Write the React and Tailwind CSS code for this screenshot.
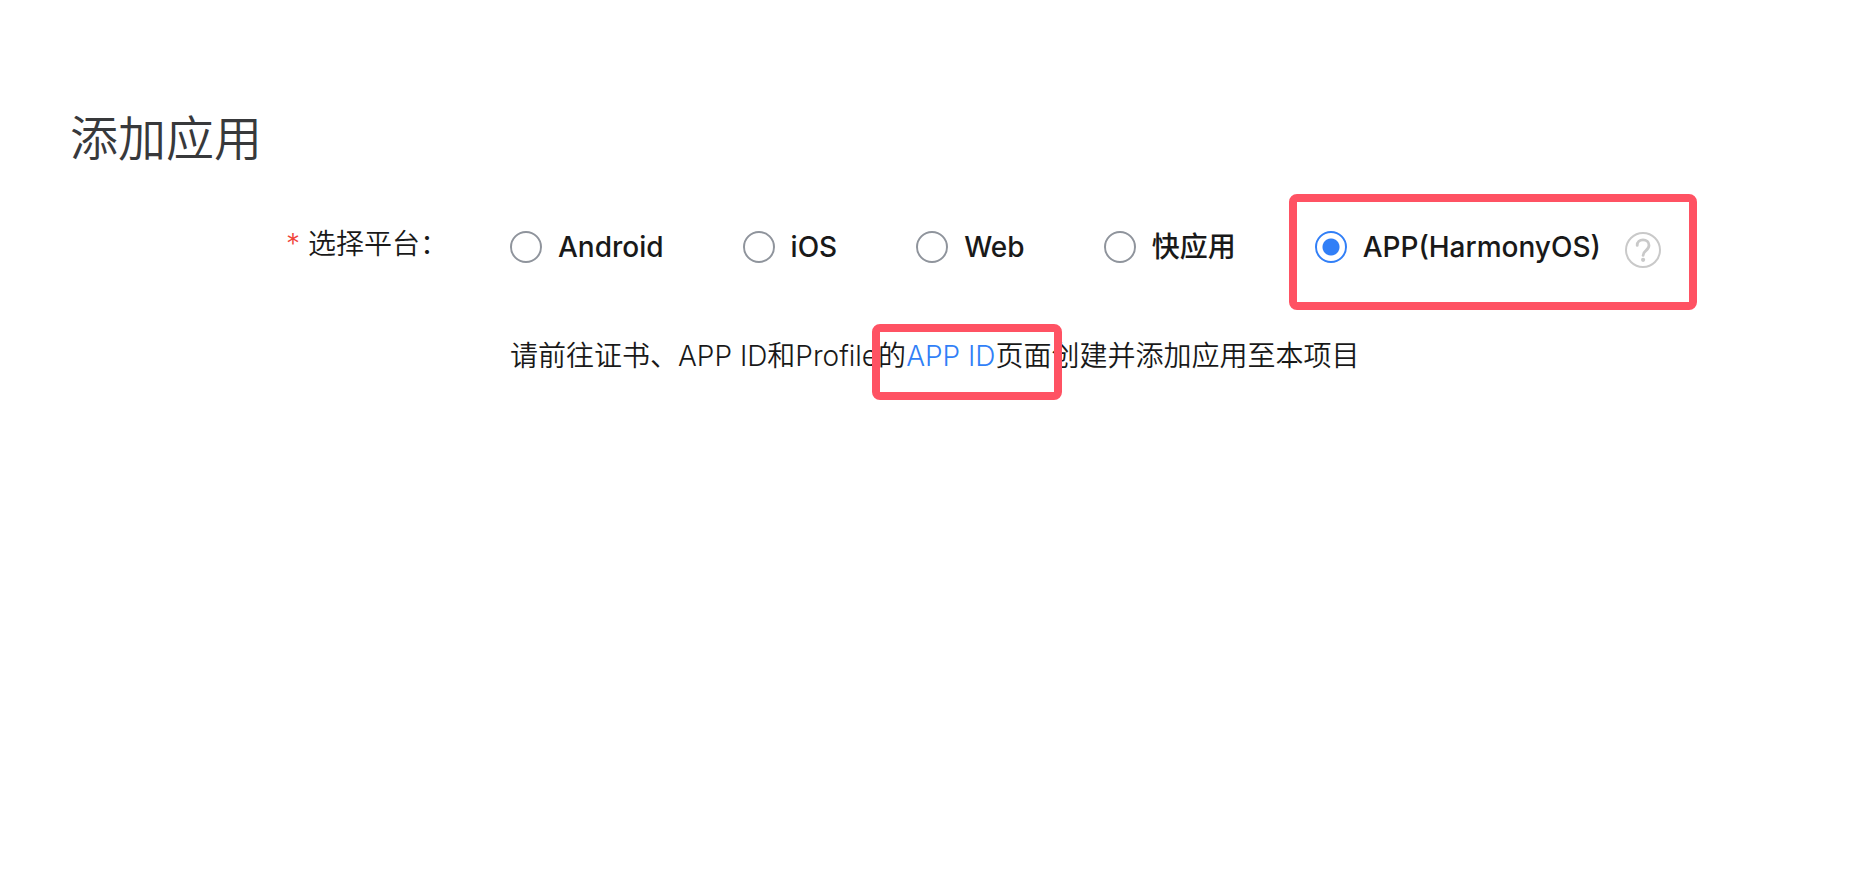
import React from 'react';

const platforms = [
  { id: 'android', label: 'Android' },
  { id: 'ios', label: 'iOS' },
  { id: 'web', label: 'Web' },
  { id: 'quickapp', label: '快应用' },
  { id: 'harmony', label: 'APP(HarmonyOS)', highlight: true, help: true },
];

const HelpIcon = () => (
  <svg viewBox="0 0 36 36" className="w-9 h-9" fill="none" stroke="#c9c9c9" strokeWidth="2">
    <circle cx="18" cy="18" r="17" />
    <path
      d="M12.2 13.4C12.2 10 14.7 7.8 18 7.8s6 2.2 6 5.5c0 2.7-1.4 4-3.1 5.4-1.7 1.4-2.8 2.5-2.8 4.7"
      strokeWidth="2.8"
      strokeLinecap="round"
    />
    <circle cx="18.1" cy="27.8" r="2.1" fill="#c9c9c9" stroke="none" />
  </svg>
);

const PlatformOption = ({ id, label, highlight, help, checked, onSelect }) => (
  <div className="relative flex items-center">
    <input
      type="radio"
      id={id}
      name="platform"
      checked={checked}
      onChange={() => onSelect(id)}
      className="appearance-none w-8 h-8 shrink-0 rounded-full border-2 border-[#8f949c] checked:border-[#317ff7] checked:bg-[radial-gradient(circle,#317ff7_8px,transparent_9px)]"
    />
    <label htmlFor={id} className="pl-4 font-medium whitespace-nowrap">{label}</label>
    {help && (
      <button type="button" aria-label="帮助" className="ml-6 mt-1.5">
        <HelpIcon />
      </button>
    )}
    {highlight && (
      <span className="absolute -left-6.5 -right-9 -top-8 -bottom-10.5 border-8 border-[#ff5263] rounded-lg pointer-events-none" />
    )}
  </div>
);

const App = () => {
  const [selected, setSelected] = React.useState('harmony');

  return (
    <main className="min-h-screen bg-white px-[70px] py-[102px] font-['Inter','Noto_Sans_CJK_SC',sans-serif] text-[28px] leading-10 text-[#191919]">
      <h1 className="text-[48px] leading-[74px] text-[#38393b] font-[350]">添加应用</h1>

      {/* Platform selection */}
      <div role="radiogroup" aria-labelledby="platform-label" className="flex mt-12">
        <div id="platform-label" className="w-[440px] shrink-0 pr-[62px] text-right whitespace-nowrap font-[350]">
          <span className="text-[#f04438] mr-2">*</span>
          选择平台：
        </div>
        <div>
          <div className="flex flex-wrap items-center gap-[79px] pt-[2px]">
            {platforms.map((item) => (
              <PlatformOption
                key={item.id}
                {...item}
                checked={selected === item.id}
                onSelect={setSelected}
              />
            ))}
          </div>

          {/* Hint for the selected platform */}
          <p className="mt-[68px] font-[350]">
            请前往证书、APP ID和Profile
            <span className="relative">
              的<a href="#app-id" className="text-[#317ff7]">APP ID</a>页面
              <span className="absolute -left-1.5 -right-2.5 -top-[15px] -bottom-[27px] border-8 border-[#ff5263] rounded-lg pointer-events-none" />
            </span>
            创建并添加应用至本项目
          </p>
        </div>
      </div>
    </main>
  );
};

export default App;
